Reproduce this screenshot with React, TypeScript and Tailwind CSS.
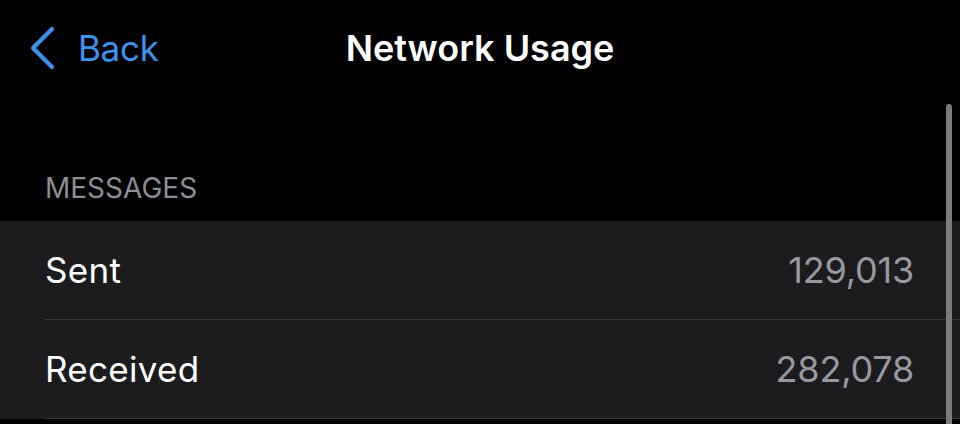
const rows = [
  { label: 'Sent', value: '129,013' },
  { label: 'Received', value: '282,078' },
];

export default function App() {
  return (
    <div
      className="relative h-[424px] w-[960px] overflow-hidden bg-black"
      style={{ fontFamily: 'Inter, "Noto Sans", sans-serif' }}
    >
      <header className="relative flex h-[96px] items-center px-[30px]">
        <button type="button" className="flex items-center text-[#3a94f0]">
          <svg width="26" height="44" viewBox="0 0 26 44" fill="none" className="-mt-[1px]">
            <polyline
              points="22,3 3,22 22,41"
              stroke="currentColor"
              strokeWidth="4.2"
              strokeLinecap="round"
              strokeLinejoin="round"
            />
          </svg>
          <span className="ml-[22px] text-[35px] leading-none tracking-[-0.3px]">Back</span>
        </button>
        <h1 className="absolute left-1/2 -translate-x-1/2 text-[36px] font-semibold leading-none tracking-[0px] text-white">
          Network Usage
        </h1>
      </header>

      <div className="flex h-[125px] items-end px-[45px] pb-[19px] text-[28px] leading-none text-[#8d8d93]">
        MESSAGES
      </div>

      <div className="bg-[#1c1c1e]">
        {rows.map((row) => (
          <div
            key={row.label}
            className="ml-[45px] flex h-[99px] items-center justify-between border-b border-[#38383a] pr-[46px]"
          >
            <span className="text-[35px] leading-none tracking-[0.3px] text-white">{row.label}</span>
            <span className="text-[36px] leading-none tracking-[-0.2px] text-[#98989e]">{row.value}</span>
          </div>
        ))}
      </div>

      <div className="absolute right-[8px] top-[104px] h-[340px] w-[6px] rounded-full bg-[#7b7b7f]" />
    </div>
  );
}
